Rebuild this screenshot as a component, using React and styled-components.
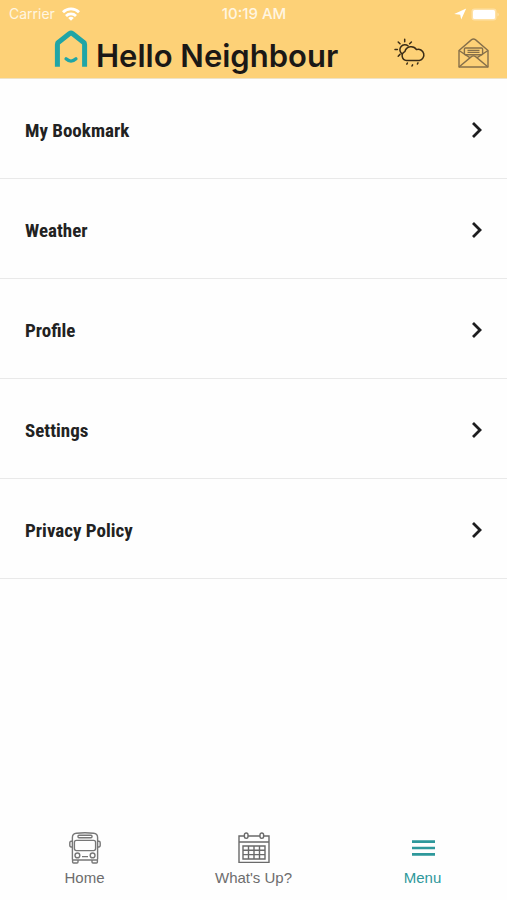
import styled, { createGlobalStyle } from "styled-components";
import { useState } from "react";

const GlobalStyle = createGlobalStyle`
  * {
    box-sizing: border-box;
  }

  body {
    margin: 0;
    background-color: #fefefe;
    font-family: "Liberation Sans", Arial, sans-serif;
  }

  svg {
    display: block;
  }
`;

const Page = styled.div`
  display: flex;
  flex-direction: column;
  min-height: 100vh;
`;

const Header = styled.header`
  border-bottom: 1px solid #eee3c8;
  background-color: #fdd177;
`;

const StatusBar = styled.div`
  display: grid;
  grid-template-columns: 1fr auto 1fr;
  align-items: center;
  height: 28px;
  padding: 0 8px 0 9px;
  color: #fff6e2;
  font-family: Inter, "Liberation Sans", sans-serif;
  font-size: 14px;
  line-height: 26px;
`;

const StatusGroup = styled.div`
  display: flex;
  align-items: center;
  justify-content: ${(props) => (props.$end ? "flex-end" : "flex-start")};
  gap: ${(props) => (props.$end ? "4px" : "7px")};
`;

const Clock = styled.time`
  font-size: 15px;
  font-weight: 500;
`;

const BrandBar = styled.div`
  display: flex;
  align-items: center;
  justify-content: space-between;
  height: 50px;
  padding: 0 18px 0 54px;
`;

const Brand = styled.h1`
  display: flex;
  align-items: flex-start;
  gap: 8px;
  height: 46px;
  margin: 0;
  color: #1b1816;
  font-family: Inter, "Liberation Sans", sans-serif;
  font-size: 31px;
  font-weight: 600;
  line-height: 52px;
  white-space: nowrap;
`;

const HeaderActions = styled.div`
  display: flex;
  align-items: center;
  gap: 32px;
`;

const IconButton = styled.button`
  padding: 0;
  border: none;
  background: none;
  cursor: pointer;
`;

const MenuList = styled.ul`
  flex: 1;
  margin: 0;
  padding: 0;
  list-style: none;
`;

const MenuLink = styled.a`
  display: flex;
  align-items: center;
  justify-content: space-between;
  height: 100px;
  padding: 3px 25px 0;
  border-bottom: 1px solid #e9e9e9;
  color: #222222;
  font-family: "Roboto Condensed", Roboto, sans-serif;
  font-size: 19px;
  font-weight: 700;
  text-decoration: none;
`;

const TabBar = styled.nav`
  display: grid;
  grid-template-columns: repeat(3, 1fr);
  height: 76px;
`;

const Tab = styled.button`
  display: flex;
  flex-direction: column;
  align-items: center;
  gap: 4px;
  padding: 8px 0 0;
  border: none;
  background: none;
  color: ${(props) => (props.$active ? "#2e989b" : "#6d6d6d")};
  font-family: "Liberation Sans", Arial, sans-serif;
  font-size: 15px;
  line-height: 20px;
  cursor: pointer;
`;

function WifiIcon() {
  return (
    <svg width="18" height="14" viewBox="0 0 18 14" fill="none" stroke="#fff" strokeWidth="2.8">
      <path d="M1 5.2a11.5 11.5 0 0 1 16 0" />
      <path d="M4 8.9a7.2 7.2 0 0 1 10 0" />
      <path d="M9 13.8 6.2 11a4 4 0 0 1 5.6 0z" fill="#fff" stroke="none" />
    </svg>
  );
}

function LocationIcon() {
  return (
    <svg width="13" height="12" viewBox="0 0 13 12" fill="#fff">
      <path d="M12.2.4 7.2 11.6 6.2 6.7.2 5.9z" />
    </svg>
  );
}

function BatteryIcon() {
  return (
    <svg width="28" height="13" viewBox="0 0 28 13">
      <rect x=".5" y=".5" width="25" height="12" rx="3" fill="#fff" opacity=".35" />
      <rect x="2" y="2" width="22" height="9" rx="1.5" fill="#fff" />
      <path d="M26.5 4.5v4q1.2-.6 1.2-2t-1.2-2z" fill="#fff" opacity=".4" />
    </svg>
  );
}

function HouseLogo() {
  return (
    <svg width="34" height="38" viewBox="0 0 34 38" fill="none" stroke="#20a5a6">
      <path d="M3.4 36.8V14.4q0-1.4 1.2-2.2L15.6 3.6q1.4-1 2.8 0l11 8.6q1.2.8 1.2 2.2v22.4" strokeWidth="5" />
      <path d="M12 28.8q5 4.6 10 0" strokeWidth="3.2" strokeLinecap="round" />
    </svg>
  );
}

function WeatherIcon() {
  return (
    <svg width="32" height="30" viewBox="0 0 32 30" fill="none" stroke="#3a2c16" strokeWidth="1.5" strokeLinecap="round">
      <path d="M7.6 15.6A5 5 0 1 1 14.2 8" />
      <path d="M10.7 1.2v2.6M4.2 4 6 5.8M17.4 4l-1.8 1.8M1 11.4h2.4M4.2 18.2 6 16.4" />
      <path d="M12.5 22.4a4.6 4.6 0 0 1-1.6-8.8 6.4 6.4 0 0 1 11.6-2 5.6 5.6 0 1 1 2.9 10.8z" strokeLinejoin="round" />
      <path d="m13.4 25-.6 1.2M18.6 26.8l-.6 1.2M24 24.8l-.6 1.2" />
    </svg>
  );
}

function MailIcon() {
  return (
    <svg width="31" height="30" viewBox="0 0 31 30" fill="none" stroke="#86704a" strokeWidth="1.4" strokeLinejoin="round">
      <path d="M1 12.5 13.6 1.6q1.9-1.2 3.8 0L30 12.5V29H1z" />
      <path d="m1 12.5 10.8 7.2M30 12.5l-10.8 7.2M1 29l12.4-10.4q2.1-1.4 4.2 0L30 29" />
      <rect x="6.4" y="10" width="18.2" height="6.8" rx="1" />
      <path d="M9.5 12.4h12M9.5 14.4h12" />
    </svg>
  );
}

function ChevronIcon() {
  return (
    <svg width="12" height="18" viewBox="0 0 12 18" fill="none" stroke="#1d1d1f" strokeWidth="2.8">
      <path d="m3 2 7 7-7 7" />
    </svg>
  );
}

function BusIcon() {
  return (
    <svg width="32" height="32" viewBox="0 0 32 32" fill="none" stroke="#777" strokeWidth="1.4">
      <path d="M3.4 27V5.5q0-4 4-4.3 8.6-.8 17.2 0 4 .3 4 4.3V27q0 1-1 1H4.4q-1 0-1-1z" />
      <rect x="9" y="3.2" width="14" height="2.6" rx="1" />
      <rect x="5.4" y="8.4" width="21.2" height="10.2" rx="2" />
      <path d="M3.4 9.2H2.2Q.8 9.2.8 10.8v2.6q0 1.6 2.6 1.6M28.6 9.2h1.2q1.4 0 1.4 1.6v2.6q0 1.6-2.6 1.6" />
      <circle cx="8.4" cy="23.4" r="2.4" />
      <circle cx="23.6" cy="23.4" r="2.4" />
      <path d="M13 24.6h6M3.6 28v2q0 1 1 1h3.4q1 0 1-1v-2M23 28v2q0 1 1 1h3.4q1 0 1-1v-2" />
    </svg>
  );
}

function CalendarIcon() {
  return (
    <svg width="32" height="32" viewBox="0 0 32 32" fill="none" stroke="#6a6a6a" strokeWidth="1.4">
      <path d="M6.4 4H1v26.4h30V4h-5.4M10 4h12M1 10h30" />
      <rect x="6.4" y="1" width="3.6" height="5.4" rx="1.8" />
      <rect x="22" y="1" width="3.6" height="5.4" rx="1.8" />
      <path d="M5 14h22v13H5zM5 18.3h22M5 22.6h22M10.5 14v13M16 14v13M21.5 14v13" />
    </svg>
  );
}

function BarsIcon() {
  return (
    <svg width="32" height="32" viewBox="0 0 32 32" stroke="#2e989b" strokeWidth="2.6">
      <path d="M5 9.6h23M5 16h23M5 22.4h23" />
    </svg>
  );
}

const menuItems = ["My Bookmark", "Weather", "Profile", "Settings", "Privacy Policy"];

const tabs = [
  { name: "Home", Icon: BusIcon },
  { name: "What's Up?", Icon: CalendarIcon },
  { name: "Menu", Icon: BarsIcon },
];

function App() {
  const [activeTab, setActiveTab] = useState("Menu");

  return (
    <Page>
      <GlobalStyle />
      <Header>
        <StatusBar>
          <StatusGroup>
            Carrier
            <WifiIcon />
          </StatusGroup>
          <Clock>10:19 AM</Clock>
          <StatusGroup $end>
            <LocationIcon />
            <BatteryIcon />
          </StatusGroup>
        </StatusBar>
        <BrandBar>
          <Brand>
            <HouseLogo />
            Hello Neighbour
          </Brand>
          <HeaderActions>
            <IconButton aria-label="Weather">
              <WeatherIcon />
            </IconButton>
            <IconButton aria-label="Messages">
              <MailIcon />
            </IconButton>
          </HeaderActions>
        </BrandBar>
      </Header>
      <MenuList>
        {menuItems.map((item) => (
          <li key={item}>
            <MenuLink href="#">
              {item}
              <ChevronIcon />
            </MenuLink>
          </li>
        ))}
      </MenuList>
      <TabBar>
        {tabs.map(({ name, Icon }) => (
          <Tab key={name} $active={activeTab === name} onClick={() => setActiveTab(name)}>
            <Icon />
            {name}
          </Tab>
        ))}
      </TabBar>
    </Page>
  );
}

export default App;
